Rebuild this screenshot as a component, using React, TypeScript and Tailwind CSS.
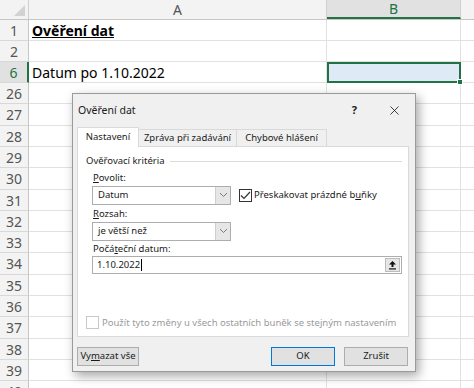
import { X } from 'lucide-react';

const rows = [
  { n: '1', h: 'h-[21px]' },
  { n: '2', h: 'h-[21px]' },
  { n: '6', h: 'h-[21px]' },
  { n: '26', h: 'h-[21px]' },
  { n: '27', h: 'h-[22px]' },
  { n: '28', h: 'h-[21px]' },
  { n: '29', h: 'h-[21px]' },
  { n: '30', h: 'h-[22px]' },
  { n: '31', h: 'h-[21px]' },
  { n: '32', h: 'h-[21px]' },
  { n: '33', h: 'h-[21px]' },
  { n: '34', h: 'h-[22px]' },
  { n: '35', h: 'h-[21px]' },
  { n: '36', h: 'h-[21px]' },
  { n: '37', h: 'h-[22px]' },
  { n: '38', h: 'h-[21px]' },
  { n: '39', h: 'h-[21px]' },
  { n: '40', h: 'h-[21px]' },
];

function Chevron() {
  return (
    <svg width="9" height="6" viewBox="0 0 9 6">
      <path d="M1 1 L4.5 4.5 L8 1" fill="none" stroke="#7a7a7a" strokeWidth="1" />
    </svg>
  );
}

function Select({ value }: { value: string }) {
  return (
    <div className="flex h-[19px] w-[139px] border border-[#adadad] bg-white">
      <div className="flex flex-1 items-center pl-[5px] text-[#1a1a1a]">{value}</div>
      <div className="flex w-[15px] items-center justify-center border-l border-[#cfcfcf] bg-[#e6e6e6]">
        <Chevron />
      </div>
    </div>
  );
}

function Checked() {
  return (
    <div className="flex h-[13px] w-[13px] items-center justify-center border border-[#333] bg-white">
      <svg width="11" height="9" viewBox="0 0 11 9">
        <path d="M1 4.5 L4 7.5 L10 1" fill="none" stroke="#333" strokeWidth="1.2" />
      </svg>
    </div>
  );
}

function Dialog() {
  return (
    <div className="absolute left-[72px] top-[93px] flex h-[279px] w-[344px] flex-col whitespace-nowrap border border-[#9a9a9a] bg-[#f0f0f0] text-[9.5px] text-[#1a1a1a] shadow-[3px_4px_10px_rgba(0,0,0,0.35)] [font-family:'Noto_Sans',sans-serif]">
      <div className="flex h-[33px] items-center pl-[5px]">
        <span className="flex-1 text-[10.5px]">Ověření dat</span>
        <span className="mr-[30px] text-[11px] font-bold">?</span>
        <X className="mr-[13px] h-[15px] w-[15px]" strokeWidth={1.3} />
      </div>
      <div className="flex h-[19px] items-end pl-[4px]">
        <div className="relative z-10 -mb-px flex h-[20px] w-[62px] items-center justify-center border border-b-0 border-[#d9d9d9] bg-white">Nastavení</div>
        <div className="flex h-[17px] w-[98px] items-center justify-center border border-l-0 border-b-0 border-[#d9d9d9]">Zpráva při zadávání</div>
        <div className="flex h-[17px] w-[90px] items-center justify-center border border-l-0 border-b-0 border-[#d9d9d9]">Chybové hlášení</div>
      </div>
      <div className="ml-[4px] flex h-[191px] w-[332px] flex-col border border-[#d9d9d9] bg-white">
        <div className="mt-[7px] flex items-center pl-[8px] pr-[6px]">
          <span>Ověřovací kritéria</span>
          <div className="ml-[6px] h-px flex-1 bg-[#dcdcdc]" />
        </div>
        <div className="mt-[3px] pl-[15px]">
          <span className="underline">P</span>ovolit:
        </div>
        <div className="flex items-center pl-[14px]">
          <Select value="Datum" />
          <div className="ml-[8px]">
            <Checked />
          </div>
          <span className="ml-[2px]">
            Přeskakovat prázdné b<span className="underline">u</span>ňky
          </span>
        </div>
        <div className="mt-[2px] pl-[15px]">
          <span className="underline">R</span>ozsah:
        </div>
        <div className="mt-[1px] pl-[14px]">
          <Select value="je větší než" />
        </div>
        <div className="mt-[1px] pl-[15px]">
          Počá<span className="underline">t</span>eční datum:
        </div>
        <div className="ml-[14px] flex h-[18px] w-[310px] border border-[#adadad] bg-white">
          <div className="flex flex-1 items-center pl-[4px]">
            1.10.2022<span className="ml-px h-[12px] w-px bg-black" />
          </div>
          <div className="m-[1px] flex w-[15px] items-center justify-center border border-[#bcbcbc] bg-[#e6e6e6]">
            <svg width="9" height="10" viewBox="0 0 9 10">
              <path d="M4.5 1 L8 4.5 H5.5 V7 H3.5 V4.5 H1 Z" fill="#111" />
              <rect x="1" y="8.3" width="7" height="1.2" fill="#111" />
            </svg>
          </div>
        </div>
        <div className="mt-auto mb-[6px] flex items-center pl-[8px] text-[#9a9a9a]">
          <div className="h-[13px] w-[13px] border border-[#c8c8c8] bg-white" />
          <span className="ml-[3px]">Použít tyto změny u všech ostatních buněk se stejným nastavením</span>
        </div>
      </div>
      <div className="mt-[10px] flex pl-[4px] pr-[7px]">
        <div className="flex h-[19px] w-[62px] items-center justify-center border border-[#adadad] bg-[#e1e1e1]">
          Vy<span className="underline">m</span>azat vše
        </div>
        <div className="ml-auto flex h-[19px] w-[64px] items-center justify-center border border-[#0078d7] bg-[#e1e1e1]">OK</div>
        <div className="ml-[9px] flex h-[19px] w-[64px] items-center justify-center border border-[#adadad] bg-[#e1e1e1]">Zrušit</div>
      </div>
    </div>
  );
}

export default function App() {
  return (
    <div className="relative h-[388px] w-[474px] overflow-hidden bg-white text-[14px] [font-family:'Noto_Sans',sans-serif]">
      <div className="flex h-[20px] border-b border-[#c6c6c6] bg-[#f3f3f3] text-[#555]">
        <div className="relative w-[29px] border-r border-[#d0d0d0]">
          <svg className="absolute bottom-[3px] right-[3px]" width="11" height="11" viewBox="0 0 11 11">
            <path d="M11 0 V11 H0 Z" fill="#d2d2d2" />
          </svg>
        </div>
        <div className="flex w-[298px] items-center justify-center border-r border-[#d0d0d0]">A</div>
        <div className="flex w-[134px] items-center justify-center border-b-2 border-r border-[#217346] border-r-[#d0d0d0] bg-[#e1e1e1] text-[#217346]">B</div>
        <div className="flex-1" />
      </div>
      {rows.map(r => {
        const sel = r.n === '6';
        return (
          <div key={r.n} className={`flex ${r.h}`}>
            <div
              className={
                sel
                  ? 'flex w-[29px] items-center justify-center border-b border-r-2 border-[#d8d8d8] border-r-[#217346] bg-[#e1e1e1] text-[#217346]'
                  : 'flex w-[29px] items-center justify-center border-b border-r border-[#d8d8d8] border-r-[#c6c6c6] bg-[#f3f3f3] text-[#555]'
              }
            >
              {r.n}
            </div>
            <div className="flex w-[298px] items-center border-b border-r border-[#e1e1e1] pl-[3px] text-black">
              {r.n === '1' && <span className="font-bold underline">Ověření dat</span>}
              {r.n === '6' && <span>Datum po 1.10.2022</span>}
            </div>
            {sel ? (
              <div className="relative w-[134px] border-2 border-[#217346] bg-[#deeaf6]">
                <div className="absolute -bottom-[4px] -right-[4px] h-[6px] w-[6px] border border-white bg-[#217346]" />
              </div>
            ) : (
              <div className="w-[134px] border-b border-r border-[#e1e1e1]" />
            )}
            <div className="flex-1 border-b border-[#e1e1e1]" />
          </div>
        );
      })}
      <Dialog />
    </div>
  );
}
